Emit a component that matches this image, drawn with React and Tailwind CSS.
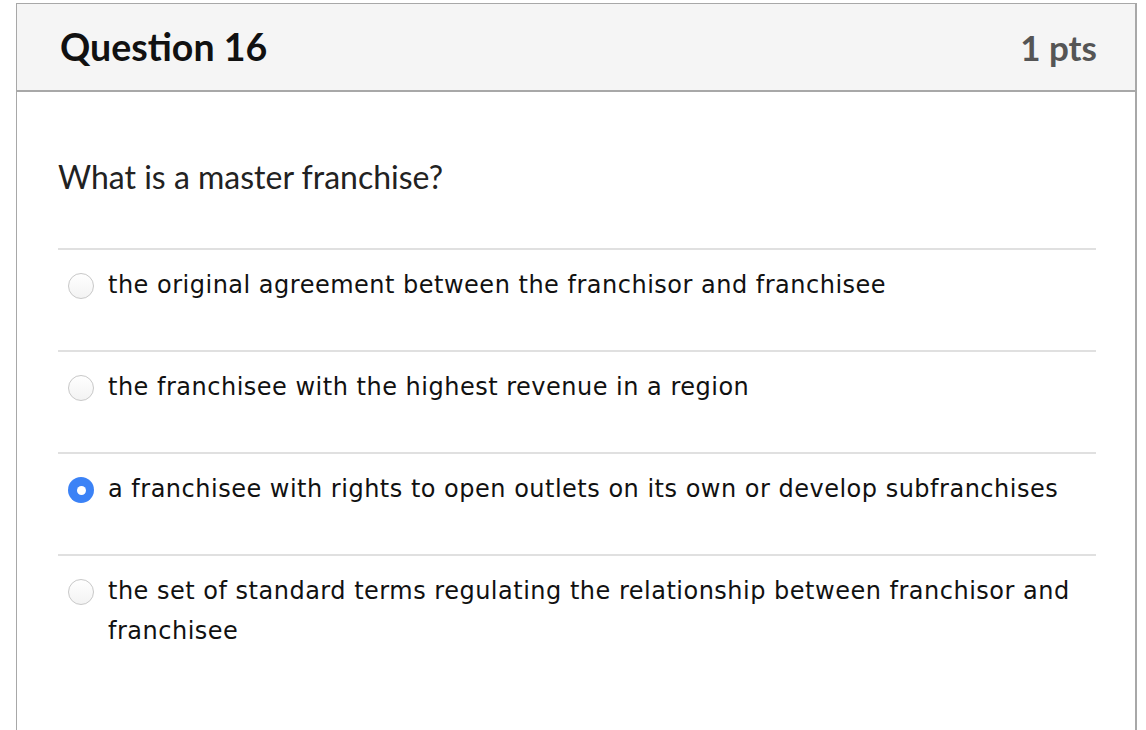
import React from 'react';

const answers = [
  { id: 'a1', text: 'the original agreement between the franchisor and franchisee', checked: false },
  { id: 'a2', text: 'the franchisee with the highest revenue in a region', checked: false },
  { id: 'a3', text: 'a franchisee with rights to open outlets on its own or develop subfranchises', checked: true },
  { id: 'a4', text: 'the set of standard terms regulating the relationship between franchisor and franchisee', checked: false },
];

const Radio = ({ checked }) =>
  checked ? (
    <span className="mt-[8px] flex h-[26px] w-[26px] shrink-0 items-center justify-center rounded-full bg-[#3b82f6]">
      <span className="h-[9px] w-[9px] rounded-full bg-white" />
    </span>
  ) : (
    <span className="mt-[8px] h-[26px] w-[26px] shrink-0 rounded-full border border-[#c8c8c8] bg-gradient-to-b from-white to-[#f3f3f3]" />
  );

export default function App() {
  return (
    <div className="min-h-[730px] bg-white pt-[3px] pl-[16px]" style={{ fontFamily: 'Lato, "Noto Sans", sans-serif' }}>
      <div className="w-[1121px] min-h-[727px] border-l border-t border-r-2 border-[#a8a8a8]">
        <div className="flex h-[88px] items-center justify-between border-b-2 border-[#a8a8a8] bg-[#f5f5f5] pl-[43px] pr-[38px]">
          <h2 className="text-[37.5px] font-bold text-[#111]">Question 16</h2>
          <span className="text-[35px] font-bold text-[#555]">1 pts</span>
        </div>

        <div className="pl-[41px] pr-[39px]">
          <p className="pt-[64px] pb-[50px] text-[32px] leading-[42px] text-[#222]">What is a master franchise?</p>

          {answers.map((a) => (
            <div key={a.id} className="border-t-2 border-[#e0e0e0]">
              <label className="flex items-start gap-[14px] pt-[15px] pb-[45px] pl-[10px]">
                <Radio checked={a.checked} />
                <span
                  className="text-[24px] leading-[40px] tracking-[0.5px] text-[#111]"
                  style={{ fontFamily: '"DejaVu Sans", Verdana, sans-serif' }}
                >
                  {a.text}
                </span>
              </label>
            </div>
          ))}
        </div>
      </div>
    </div>
  );
}
